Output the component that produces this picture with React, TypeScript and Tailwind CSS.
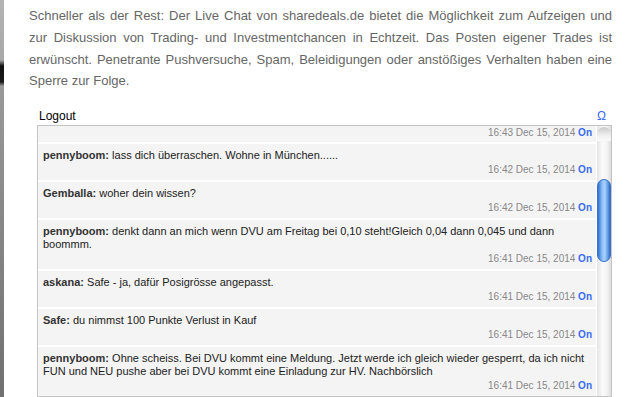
import React from "react";

type Msg = { user?: string; text?: string[]; time: string };

const messages: Msg[] = [
  { time: "16:43 Dec 15, 2014" },
  { user: "pennyboom", text: ["lass dich überraschen. Wohne in München......"], time: "16:42 Dec 15, 2014" },
  { user: "Gemballa", text: ["woher dein wissen?"], time: "16:42 Dec 15, 2014" },
  {
    user: "pennyboom",
    text: ["denkt dann an mich wenn DVU am Freitag bei 0,10 steht!Gleich 0,04 dann 0,045 und dann", "boommm."],
    time: "16:41 Dec 15, 2014",
  },
  { user: "askana", text: ["Safe - ja, dafür Posigrösse angepasst."], time: "16:41 Dec 15, 2014" },
  { user: "Safe", text: ["du nimmst 100 Punkte Verlust in Kauf"], time: "16:41 Dec 15, 2014" },
  {
    user: "pennyboom",
    text: [
      "Ohne scheiss. Bei DVU kommt eine Meldung. Jetzt werde ich gleich wieder gesperrt, da ich nicht",
      "FUN und NEU pushe aber bei DVU kommt eine Einladung zur HV. Nachbörslich",
    ],
    time: "16:41 Dec 15, 2014",
  },
];

function Row({ m }: { m: Msg }) {
  return (
    <div className={`bg-[#f4f4f4] pl-[5px] pr-[4px] ${m.user ? "pt-[5px] pb-[3px]" : "h-[16px] pt-[0px]"}`}>
      {m.user && (
        <div className="whitespace-nowrap text-[11px] leading-[13px] text-[#222]">
          <b className="text-[#333]">{m.user}:</b> {m.text![0]}
          {m.text!.slice(1).map((t, i) => (
            <div key={i}>{t}</div>
          ))}
        </div>
      )}
      <div className={`text-right text-[10px] leading-[14px] text-[#888] ${m.user ? "mt-[1px]" : ""}`}>
        {m.time} <b className="text-[#3a6cf5]">On</b>
      </div>
    </div>
  );
}

export default function App() {
  return (
    <div className="relative h-[397px] w-[628px] overflow-hidden bg-white" style={{ fontFamily: "'Liberation Sans', Arial, sans-serif" }}>
      <div className="absolute left-0 top-0 h-full w-[4px] bg-[linear-gradient(to_bottom,#b4b4b4_0px,#a8a8a8_60px,#111_66px,#1a1a1a_82px,#999_86px,#8a8a8a_200px,#707070_397px)]" />
      <p className="ml-[29px] mr-[16px] pt-[5px] text-justify text-[13px] leading-[21.8px] text-[#666]">
        Schneller als der Rest: Der Live Chat von sharedeals.de bietet die Möglichkeit zum Aufzeigen und zur Diskussion von Trading- und Investmentchancen in Echtzeit. Das Posten eigener Trades ist erwünscht. Penetrante Pushversuche, Spam, Beleidigungen oder anstößiges Verhalten haben eine Sperre zur Folge.
      </p>
      <div className="ml-[37px] mr-[16px] mt-[17px]">
        <div className="flex items-end justify-between px-[2px] pb-[2px] text-[12px] leading-[14px]">
          <span className="text-black">Logout</span>
          <span className="pr-[4px] text-[#3a6cf5]">Ω</span>
        </div>
        <div className="flex border border-[#c4c4c4] bg-white">
          <div className="flex flex-1 flex-col gap-[2px]">
            {messages.map((m, i) => (
              <Row key={i} m={m} />
            ))}
          </div>
          <div className="relative ml-[1px] w-[14px] bg-[linear-gradient(to_right,#e4e4e4,#fafafa_40%,#f4f4f4_70%,#dcdcdc)]">
            <div className="absolute left-0 top-[1px] h-[14px] w-[14px] rounded-t-[7px] bg-[linear-gradient(to_bottom,#c8c8c8,#f0f0f0_60%,#fafafa)]" />
            <div className="absolute left-[0px] top-[53px] h-[83px] w-[14px] rounded-[7px] border border-[#3a6fc4] bg-[linear-gradient(to_right,#2f6fd4,#8fc0f5_35%,#a9d2fb_55%,#5a97e6_85%,#2c66c7)]" />
          </div>
        </div>
      </div>
    </div>
  );
}
